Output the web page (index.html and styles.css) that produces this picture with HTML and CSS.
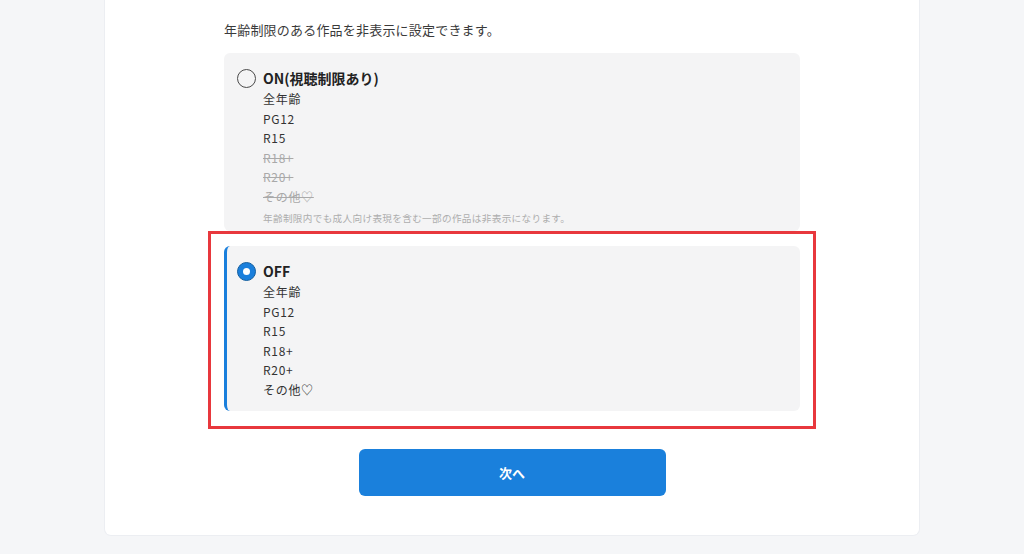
FILE: index.html
```html
<!DOCTYPE html>
<html lang="ja">
<head>
<meta charset="utf-8">
<title>視聴制限設定</title>
<link rel="stylesheet" href="styles.css">
</head>
<body>
<main class="card">
  <div class="column">
    <p class="desc">年齢制限のある作品を非表示に設定できます。</p>
    <div class="options">
      <label class="option">
        <span class="title-row">
          <span class="radio"></span>
          <span class="title">ON(視聴制限あり)</span>
        </span>
        <ul class="ratings">
          <li>全年齢</li>
          <li>PG12</li>
          <li>R15</li>
          <li class="off">R18+</li>
          <li class="off">R20+</li>
          <li class="off">その他♡</li>
        </ul>
        <p class="note">年齢制限内でも成人向け表現を含む一部の作品は非表示になります。</p>
      </label>
      <div class="highlight-wrap">
        <label class="option selected">
          <span class="title-row">
            <span class="radio checked"></span>
            <span class="title">OFF</span>
          </span>
          <ul class="ratings">
            <li>全年齢</li>
            <li>PG12</li>
            <li>R15</li>
            <li>R18+</li>
            <li>R20+</li>
            <li>その他♡</li>
          </ul>
        </label>
        <span class="highlight"></span>
      </div>
    </div>
    <div class="actions">
      <button class="next" type="button">次へ</button>
    </div>
  </div>
</main>
</body>
</html>
```

FILE: styles.css
```css
* { box-sizing: border-box; }
html, body { margin: 0; padding: 0; }
body {
  background: #f5f6f8;
  font-family: "Noto Sans CJK JP", "Noto Sans", sans-serif;
  color: #333;
  height: 554px;
  overflow: hidden;
}
.card {
  width: 816px;
  margin-left: 104px;
  height: 536px;
  background: #fff;
  border: 1px solid #eceef2;
  border-top: none;
  border-radius: 0 0 7px 7px;
  padding-top: 20px;
}
.column {
  width: 576px;
  margin: 0 auto;
}
.desc {
  margin: 0 0 13px;
  font-size: 13px;
  line-height: 20px;
  color: #3a3a3a;
  letter-spacing: 0.2px;
}
.options {
  display: flex;
  flex-direction: column;
  gap: 15px;
}
.option {
  display: block;
  background: #f4f4f5;
  border-left: 3px solid transparent;
  border-radius: 6px;
  padding: 15px 16px 12px 10px;
}
.option.selected {
  border-left-color: #1a7fdc;
}
.title-row {
  display: flex;
  align-items: center;
  gap: 7px;
  height: 21px;
  padding-bottom: 1px;
}
.radio {
  width: 19px;
  height: 19px;
  border-radius: 50%;
  border: 1.6px solid #4a4a4a;
  flex: none;
  display: flex;
  align-items: center;
  justify-content: center;
}
.radio.checked {
  background: #1a7fdc;
  border-color: #155f9f;
}
.radio.checked::after {
  content: "";
  width: 7px;
  height: 7px;
  border-radius: 50%;
  background: #fff;
}
.title {
  font-size: 14px;
  font-weight: 700;
  color: #222;
  line-height: 19px;
}
.ratings {
  list-style: none;
  margin: 0;
  padding: 0 0 0 26px;
  font-size: 12px;
  line-height: 19.5px;
  color: #333;
  letter-spacing: 0.7px;
}
.ratings .off {
  color: #a9a9a9;
  text-decoration: line-through;
}
.note {
  margin: 6px 0 -6px 26px;
  font-size: 9.6px;
  line-height: 13px;
  color: #adadad;
  letter-spacing: 0.35px;
}
.highlight-wrap {
  position: relative;
}
.highlight {
  position: absolute;
  left: -16px;
  right: -16px;
  top: -15px;
  bottom: -18px;
  border: 3px solid #e8383d;
  pointer-events: none;
}
.actions {
  display: flex;
  justify-content: center;
  padding-top: 38px;
}
.next {
  width: 307px;
  height: 47px;
  border: none;
  border-radius: 6px;
  background: #1a80dc;
  color: #fff;
  font-family: "Noto Sans CJK JP", "Noto Sans", sans-serif;
  font-size: 13px;
  font-weight: 700;
}
```
